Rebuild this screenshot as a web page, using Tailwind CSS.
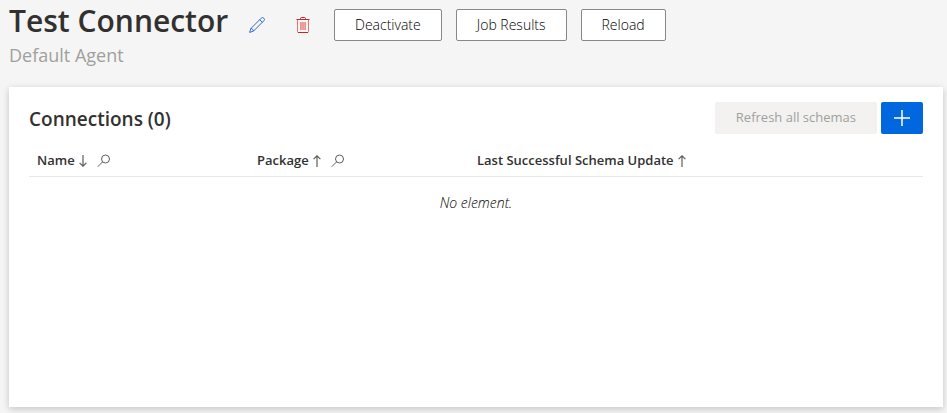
<!DOCTYPE html>
<html lang="en">
<head>
  <meta charset="UTF-8">
  <meta name="viewport" content="width=device-width, initial-scale=1.0">
  <title>Test Connector</title>
  <script src="https://cdn.jsdelivr.net/npm/@tailwindcss/browser@4"></script>
</head>
<body class="bg-[#f5f5f5] min-h-screen flex flex-col pl-[9px] pr-1 pb-1.5 font-['Open_Sans','Noto_Sans',sans-serif] text-[13px] text-[#323130]">
  <header class="h-[87px]">
    <div class="flex items-start pt-[9px]">
      <h1 class="w-[232px] -mt-1 text-[30px] leading-8 font-semibold whitespace-nowrap">Test Connector</h1>
      <button type="button" aria-label="Edit" class="w-8 h-8 flex items-center justify-center">
        <svg class="size-4" viewBox="0 0 16 16" fill="none" stroke="#2b6cd4" stroke-linejoin="round">
          <path d="M.6 15.4 1.9 11.5 12.2 1.2a1.8 1.8 0 0 1 2.6 0 1.8 1.8 0 0 1 0 2.6L4.5 14.1ZM10.7 2.7l2.6 2.6M1.9 11.5c1.4.1 2.5 1.2 2.6 2.6"/>
        </svg>
      </button>
      <button type="button" aria-label="Delete" class="ml-3.5 w-8 h-8 flex items-center justify-center">
        <svg class="size-4" viewBox="0 0 16 16" fill="none">
          <path d="M2.5 2.5v12q0 1 1 1h9q1 0 1-1v-12" stroke="#dc7777"/>
          <path d="M5 5h6v8H5z" fill="#f2a49c"/>
          <path d="M5.5 5v8M8 5v8M10.5 5v8" stroke="#e8968d"/>
          <path d="M1.5 2.5h13M5.5 2.5v-1q0-1 1-1h3q1 0 1 1v1M3 15.5h10" stroke="#c4262e"/>
        </svg>
      </button>
      <div class="ml-[15px] flex gap-3.5 text-sm font-light text-black">
        <button type="button" class="h-8 px-5 border border-[#8a8886] rounded-xs bg-white">Deactivate</button>
        <button type="button" class="h-8 px-5 border border-[#8a8886] rounded-xs bg-white">Job Results</button>
        <button type="button" class="h-8 px-5 border border-[#8a8886] rounded-xs bg-white">Reload</button>
      </div>
    </div>
    <p class="mt-0.5 text-lg leading-6 text-[#a19f9d]">Default Agent</p>
  </header>

  <main class="flex-1 bg-white px-5 pt-[15px] shadow-[0_2px_7px_rgba(0,0,0,0.2)]">
    <div class="flex items-center justify-between">
      <h2 class="pt-0.5 text-[19px] leading-6 font-semibold">Connections (0)</h2>
      <div class="flex gap-1">
        <button type="button" disabled class="h-8 px-[21px] rounded-xs bg-[#f3f2f1] text-[#a19f9d]">Refresh all schemas</button>
        <button type="button" aria-label="Add connection" class="w-[42px] h-8 rounded-xs bg-[#0067df] flex items-center justify-center">
          <svg class="size-4" viewBox="0 0 16 16" stroke="#fff" stroke-width="1.5"><path d="M8 0v16M0 8h16"/></svg>
        </button>
      </div>
    </div>
    <table class="mt-2.5 w-full table-fixed">
      <thead>
        <tr class="h-8 border-b border-[#e8e8e8] text-left">
          <th class="w-[220px] px-2 pt-0.5 font-semibold">
            <div class="flex items-center">
              Name
              <button type="button" aria-label="Sort by name" class="ml-1"><svg class="w-2 h-3" viewBox="0 0 8 12" fill="none" stroke="#605e5c" stroke-width="1.2"><path d="M4 0v11.2M.6 7.8 4 11.2l3.4-3.4"/></svg></button>
              <button type="button" aria-label="Search name" class="ml-2.5"><svg class="size-3.5" viewBox="0 0 14 14" fill="none" stroke="#605e5c"><circle cx="8.5" cy="5" r="4"/><path d="M5.6 7.9.8 12.7"/></svg></button>
            </div>
          </th>
          <th class="w-[220px] px-2 pt-0.5 font-semibold">
            <div class="flex items-center">
              Package
              <button type="button" aria-label="Sort by package" class="ml-1"><svg class="w-2 h-3" viewBox="0 0 8 12" fill="none" stroke="#605e5c" stroke-width="1.2"><path d="M4 12V.8M.6 4.2 4 .8l3.4 3.4"/></svg></button>
              <button type="button" aria-label="Search package" class="ml-2.5"><svg class="size-3.5" viewBox="0 0 14 14" fill="none" stroke="#605e5c"><circle cx="8.5" cy="5" r="4"/><path d="M5.6 7.9.8 12.7"/></svg></button>
            </div>
          </th>
          <th class="px-2 pt-0.5 font-semibold">
            <div class="flex items-center">
              Last Successful Schema Update
              <button type="button" aria-label="Sort by last update" class="ml-1"><svg class="w-2 h-3" viewBox="0 0 8 12" fill="none" stroke="#605e5c" stroke-width="1.2"><path d="M4 12V.8M.6 4.2 4 .8l3.4 3.4"/></svg></button>
            </div>
          </th>
        </tr>
      </thead>
      <tbody>
        <tr>
          <td colspan="3" class="h-[54px] text-center text-sm font-light text-black italic">No element.</td>
        </tr>
      </tbody>
    </table>
  </main>
</body>
</html>
